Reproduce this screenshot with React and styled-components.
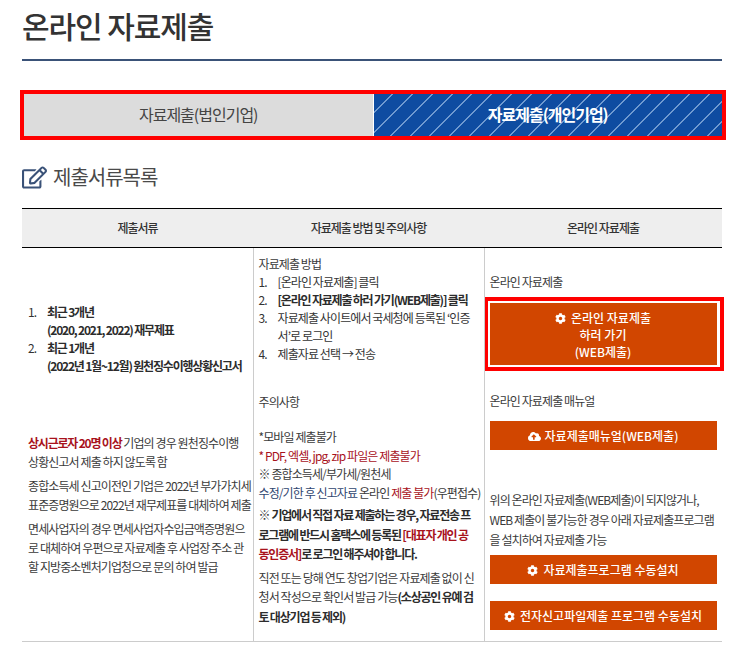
import styled, { createGlobalStyle } from "styled-components";
import { FaRegEdit, FaCog, FaCloudUploadAlt } from "react-icons/fa";

const GlobalStyle = createGlobalStyle`
  html, body {
    margin: 0;
    padding: 0;
    background: #fff;
  }
  body {
    font-family: "Noto Sans CJK KR", "Noto Sans", sans-serif;
    color: #333;
  }
`;

const Page = styled.div`
  width: 700px;
  margin-left: 22px;
`;

const Title = styled.h1`
  height: 59px;
  margin: 0 0 29px;
  border-bottom: 2px solid #3a5278;
  font-size: 30px;
  line-height: 51px;
  font-weight: 500;
  letter-spacing: -1.1px;
  color: #333;
`;

const Tabs = styled.div`
  display: flex;
  box-sizing: border-box;
  width: 706px;
  height: 50px;
  margin-left: -2px;
  border: 4px solid #f00;
`;

const Tab = styled.a`
  flex: 1;
  display: flex;
  align-items: center;
  justify-content: center;
  padding-bottom: 3px;
  font-size: 16px;
  letter-spacing: -1px;
  color: ${(p) => (p.$active ? "#fff" : "#444")};
  font-weight: ${(p) => (p.$active ? 700 : 400)};
  border-left: ${(p) => (p.$active ? "1px solid #fff" : "none")};
  background: ${(p) =>
    p.$active
      ? "repeating-linear-gradient(135deg, #0e4ca1 0 12.5px, #6f9ad0 12.5px 14px)"
      : "#dcdcdc"};
`;

const SectionTitle = styled.h2`
  display: flex;
  align-items: center;
  gap: 6px;
  height: 24px;
  margin: 25px 0 19px;
  font-size: 20px;
  line-height: 24px;
  font-weight: 400;
  letter-spacing: -1px;
  color: #4a4a4a;

  svg {
    width: 25px;
    height: 25px;
    color: #3a5278;
  }
`;

const Table = styled.table`
  width: 700px;
  table-layout: fixed;
  border-collapse: collapse;
  font-size: 12px;
  letter-spacing: -0.9px;
  white-space: nowrap;
  border-bottom: 1px solid #ccc;
`;

const HeadCell = styled.th`
  box-sizing: border-box;
  height: 39px;
  padding: 0 0 2px;
  background: #eee;
  border-top: 1px solid #000;
  border-bottom: 1px solid #000;
  font-size: 12px;
  font-weight: 500;
  letter-spacing: -1px;
  color: #333;
`;

const BodyCell = styled.td`
  height: 394px;
  box-sizing: border-box;
  padding: ${(p) => p.$top}px 5px 0 ${(p) => (p.$first ? 6 : 5)}px;
  vertical-align: top;
  border-left: ${(p) => (p.$first ? "none" : "1px solid #ccc")};
`;

const NumberList = styled.ol`
  margin: 0;
  padding: 0;
  list-style: none;
  counter-reset: item;
  line-height: 18px;

  li {
    display: flex;
    counter-increment: item;
  }

  li::before {
    content: counter(item) ".";
    flex: 0 0 19px;
  }
`;

const Strong = styled.strong`
  font-weight: 700;
  letter-spacing: -1.2px;
  color: ${(p) => (p.$red ? "#a8121c" : "#2c2c2c")};
`;

const Para = styled.p`
  margin: ${(p) => p.$top || 0}px 0 ${(p) => p.$bottom || 0}px;
  line-height: ${(p) => p.$line || 18}px;
  color: ${(p) => p.$color || "#3a3a3a"};
`;

const Red = styled.span`
  color: #a8121c;
`;

const Navy = styled.span`
  color: #2f4670;
`;

const Highlight = styled.div`
  box-sizing: border-box;
  width: 240px;
  margin: 6px 0 21px -6px;
  padding: 2px 3px 2px 2px;
  border: 4px solid #f00;
`;

const OrangeButton = styled.a`
  display: flex;
  flex-direction: column;
  align-items: center;
  justify-content: center;
  box-sizing: border-box;
  width: ${(p) => (p.$inBox ? "100%" : "227px")};
  height: ${(p) => (p.$inBox ? "62px" : "29px")};
  margin: ${(p) => p.$margin || "0"};
  background: #d14600;
  color: #fff;
  font-size: 12px;
  line-height: 17px;
  font-weight: 500;
  letter-spacing: 0;

  svg {
    width: 11px;
    height: 11px;
    margin-right: 5px;
    vertical-align: -1px;
  }
`;

const CloudIcon = styled(FaCloudUploadAlt)`
  && {
    width: 13px;
    height: 13px;
    margin-right: 4px;
    vertical-align: -2px;
  }
`;

export default function App() {
  return (
    <Page>
      <GlobalStyle />
      <Title>온라인 자료제출</Title>
      <Tabs>
        <Tab>자료제출(법인기업)</Tab>
        <Tab $active>자료제출(개인기업)</Tab>
      </Tabs>
      <SectionTitle>
        <FaRegEdit />
        제출서류목록
      </SectionTitle>
      <Table>
        <colgroup>
          <col width="231" />
          <col width="231" />
          <col width="238" />
        </colgroup>
        <thead>
          <tr>
            <HeadCell>제출서류</HeadCell>
            <HeadCell>자료제출 방법 및 주의사항</HeadCell>
            <HeadCell>온라인 자료제출</HeadCell>
          </tr>
        </thead>
        <tbody>
          <tr>
            <BodyCell $first $top={55}>
              <NumberList>
                <li>
                  <Strong>
                    최근 3개년
                    <br />
                    (2020, 2021, 2022) 재무제표
                  </Strong>
                </li>
                <li>
                  <Strong>
                    최근 1개년
                    <br />
                    (2022년 1월~12월) 원천징수이행상황신고서
                  </Strong>
                </li>
              </NumberList>
              <Para $top={58} $bottom={5} $line={19}>
                <Strong $red>상시근로자 20명 이상</Strong> 기업의 경우 원천징수이행
                <br />
                상황신고서 제출 하지 않도록 함
              </Para>
              <Para $bottom={5} $line={19}>
                종합소득세 신고이전인 기업은 2022년 부가가치세
                <br />
                표준증명원으로 2022년 재무제표를 대체하여 제출
              </Para>
              <Para $line={19}>
                면세사업자의 경우 면세사업자수입금액증명원으
                <br />
                로 대체하여 우편으로 자료제출 후 사업장 주소 관
                <br />
                할 지방중소벤처기업청으로 문의 하여 발급
              </Para>
            </BodyCell>
            <BodyCell $top={7}>
              <Para>자료제출 방법</Para>
              <NumberList>
                <li>[온라인 자료제출] 클릭</li>
                <li>
                  <Strong>[온라인 자료제출 하러 가기(WEB제출)] 클릭</Strong>
                </li>
                <li>
                  <span>
                    자료제출 사이트에서 국세청에 등록된 ‘인증
                    <br />
                    서’로 로그인
                  </span>
                </li>
                <li>제출자료 선택 → 전송</li>
              </NumberList>
              <Para $top={30}>주의사항</Para>
              <Para $top={17} $line={18.5}>*모바일 제출불가</Para>
              <Para $line={18.5} $color="#a8121c">
                * PDF, 엑셀, jpg, zip 파일은 제출불가
              </Para>
              <Para $line={18.5} $bottom={3}>
                ※ 종합소득세/부가세/원천세
                <br />
                <Navy>수정/기한 후 신고자료</Navy> 온라인 <Red>제출 불가</Red>(우편접수)
              </Para>
              <Para $line={19.5} $bottom={4}>
                ※ <Strong>기업에서 직접 자료 제출하는 경우, 자료전송 프</Strong>
                <br />
                <Strong>로그램에 반드시 홈택스에 등록된 </Strong>
                <Strong $red>[대표자 개인 공</Strong>
                <br />
                <Strong $red>동인증서]</Strong>
                <Strong>로 로그인 해주셔야 합니다.</Strong>
              </Para>
              <Para $line={19.5}>
                직전 또는 당해 연도 창업기업은 자료제출 없이 신
                <br />
                청서 작성으로 확인서 발급 가능
                <Strong>(소상공인 유예 검</Strong>
                <br />
                <Strong>토 대상기업 등 제외)</Strong>
              </Para>
            </BodyCell>
            <BodyCell $top={25}>
              <Para>온라인 자료제출</Para>
              <Highlight>
                <OrangeButton $inBox>
                  <span>
                    <FaCog />온라인 자료제출
                  </span>
                  <span>하러 가기</span>
                  <span>(WEB제출)</span>
                </OrangeButton>
              </Highlight>
              <Para>온라인 자료제출 매뉴얼</Para>
              <OrangeButton $margin="11px 0 40px">
                <span>
                  <CloudIcon />자료제출매뉴얼(WEB제출)
                </span>
              </OrangeButton>
              <Para $line={20}>
                위의 온라인 자료제출(WEB제출)이 되지않거나,
                <br />
                WEB 제출이 불가능한 경우 아래 자료제출프로그램
                <br />
                을 설치하여 자료제출 가능
              </Para>
              <OrangeButton $margin="5px 0 17px">
                <span>
                  <FaCog />자료제출프로그램 수동설치
                </span>
              </OrangeButton>
              <OrangeButton>
                <span>
                  <FaCog />전자신고파일제출 프로그램 수동설치
                </span>
              </OrangeButton>
            </BodyCell>
          </tr>
        </tbody>
      </Table>
    </Page>
  );
}
